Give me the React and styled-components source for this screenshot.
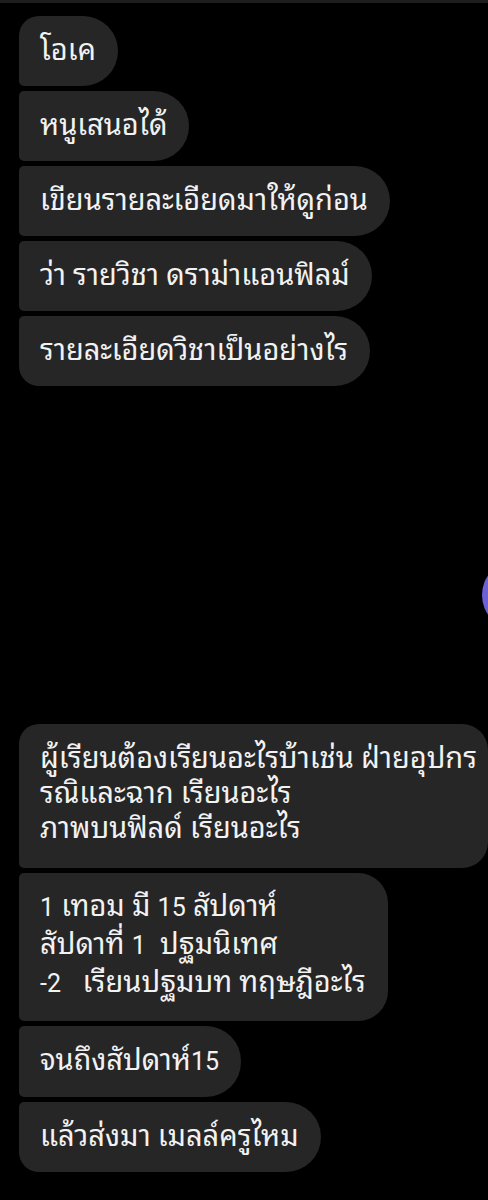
import styled, { createGlobalStyle } from 'styled-components';

const GlobalStyle = createGlobalStyle`
  html, body {
    margin: 0;
    padding: 0;
    background: #000;
  }
  body {
    font-family: Roboto, 'Noto Sans Thai Looped', sans-serif;
  }
`;

const Screen = styled.div`
  position: relative;
  width: 488px;
  height: 1200px;
  overflow: hidden;
  background: #000;
`;

const TopBar = styled.div`
  height: 3px;
  background: #1e1e1e;
`;

const Group = styled.div`
  display: flex;
  flex-direction: column;
  align-items: flex-start;
  gap: 5px;
  padding: 13px 0 0 19px;
`;

const Spacer = styled.div`
  height: ${(p) => p.$h}px;
`;

const Bubble = styled.div`
  box-sizing: border-box;
  max-width: 469px;
  background: #262626;
  color: #f2f2f2;
  font-size: 29px;
  line-height: 37px;
  padding: 16px 22px 17px 21px;
  white-space: nowrap;
  border-radius: ${(p) => (p.$first ? '20px' : '5px')} ${(p) => p.$r}px
    ${(p) => p.$r}px ${(p) => (p.$last ? '20px' : '5px')};
`;

const Bubble2 = styled(Bubble)`
  line-height: ${(p) => p.$lh}px;
  padding-top: ${(p) => p.$pt}px;
  padding-bottom: ${(p) => p.$pb}px;
`;

const Num = styled.span`
  font-size: 25px;
`;

const Fab = styled.div`
  position: absolute;
  left: 482px;
  top: 560px;
  width: 70px;
  height: 70px;
  border-radius: 50%;
  background: #6b62d6;
`;

export default function App() {
  return (
    <Screen>
      <GlobalStyle />
      <TopBar />
      <Group>
        <Bubble $first $r={35}>โอเค</Bubble>
        <Bubble $r={35}>หนูเสนอได้</Bubble>
        <Bubble $r={35}>เขียนรายละเอียดมาให้ดูก่อน</Bubble>
        <Bubble $r={35}>ว่า รายวิชา ดราม่าแอนฟิลม์</Bubble>
        <Bubble $last $r={35}>รายละเอียดวิชาเป็นอย่างไร</Bubble>
      </Group>
      <Spacer $h={325} />
      <Group>
        <Bubble2 $first $r={26} $lh={35} $pt={17} $pb={22}>
          ผู้เรียนต้องเรียนอะไรบ้าเช่น ฝ่ายอุปกร
          <br />
          รณิและฉาก เรียนอะไร
          <br />
          ภาพบนฟิลด์ เรียนอะไร
        </Bubble2>
        <Bubble2 $r={30} $lh={37} $pt={15} $pb={19}>
          <Num>1</Num> เทอม มี <Num>15</Num> สัปดาห์
          <br />
          สัปดาที่ <Num>1</Num>&nbsp; ปฐมนิเทศ
          <br />
          <Num>-2</Num>&nbsp;&nbsp; เรียนปฐมบท ทฤษฎีอะไร
        </Bubble2>
        <Bubble $r={35}>
          จนถึงสัปดาห์<Num>15</Num>
        </Bubble>
        <Bubble $last $r={35}>แล้วส่งมา เมลล์ครูไหม</Bubble>
      </Group>
      <Fab />
    </Screen>
  );
}
